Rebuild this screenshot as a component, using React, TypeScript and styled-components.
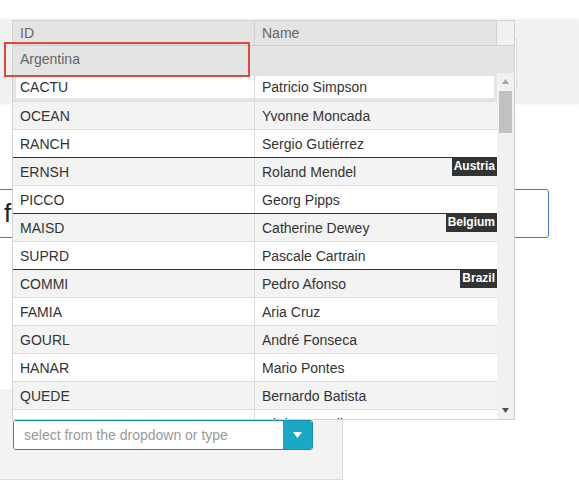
import React from "react";
import styled, { createGlobalStyle } from "styled-components";

const GlobalStyle = createGlobalStyle`
  html, body {
    margin: 0;
    padding: 0;
    background: #fff;
    font-family: "Liberation Sans", Arial, sans-serif;
  }
  * {
    box-sizing: border-box;
  }
`;

interface ICustomer {
  id: string;
  name: string;
  country?: string;
}

const customers: ICustomer[] = [
  { id: "CACTU", name: "Patricio Simpson" },
  { id: "OCEAN", name: "Yvonne Moncada" },
  { id: "RANCH", name: "Sergio Gutiérrez" },
  { id: "ERNSH", name: "Roland Mendel", country: "Austria" },
  { id: "PICCO", name: "Georg Pipps" },
  { id: "MAISD", name: "Catherine Dewey", country: "Belgium" },
  { id: "SUPRD", name: "Pascale Cartrain" },
  { id: "COMMI", name: "Pedro Afonso", country: "Brazil" },
  { id: "FAMIA", name: "Aria Cruz" },
  { id: "GOURL", name: "André Fonseca" },
  { id: "HANAR", name: "Mario Pontes" },
  { id: "QUEDE", name: "Bernardo Batista" },
  { id: "QUEEN", name: "Lúcia Carvalho" },
];

const Page = styled.div`
  position: relative;
  width: 579px;
  height: 497px;
  overflow: hidden;
  padding-top: 21px;
`;

const TopPanel = styled.div`
  height: 83px;
  background: #f1f1f1;
  box-shadow: 0 -1px 4px rgba(0, 0, 0, 0.12);
  padding: 18px 0 0 20px;
`;

const BackField = styled.div`
  width: 497px;
  height: 48px;
  background: #fff;
  border: 1px solid #dcdcdc;
`;

const BlueField = styled.div`
  margin: 85px 0 0 -2px;
  width: 551px;
  height: 49px;
  border: 1px solid #4a74e6;
  border-radius: 3px;
  padding-left: 5px;
  display: flex;
  align-items: center;
  font-size: 26px;
  color: #222;
`;

const BottomPanel = styled.div`
  margin-top: 151px;
  width: 343px;
  height: 91px;
  background: #f3f3f3;
  border-right: 1px solid #dcdcdc;
  border-bottom: 1px solid #dcdcdc;
  padding: 31px 0 0 13px;
`;

const Combo = styled.div`
  width: 300px;
  height: 30px;
  display: flex;
  border: 1px solid #1690aa;
  border-radius: 3px;
  overflow: hidden;
  background: #fff;
`;

const ComboInput = styled.input`
  flex: 1;
  min-width: 0;
  border: none;
  outline: none;
  padding: 0 0 0 10px;
  font-family: "Liberation Sans", Arial, sans-serif;
  font-size: 14px;
  color: #333;
  background: #fff;

  &::placeholder {
    color: #9a9a9a;
  }
`;

const ComboButton = styled.div`
  width: 29px;
  background: #19a9c7;
  display: flex;
  align-items: center;
  justify-content: center;
`;

const Popup = styled.div`
  position: absolute;
  left: 12px;
  top: 20px;
  width: 503px;
  height: 400px;
  background: #fff;
  border: 1px solid #d2d2d2;
  display: flex;
  flex-direction: column;
`;

const HeaderRow = styled.div`
  display: grid;
  grid-template-columns: 242px 242px 17px;
  height: 25px;
  background: #e4e4e4;
  border-bottom: 1px solid #d0d0d0;
`;

const HeaderCell = styled.div`
  padding-left: 7px;
  line-height: 24px;
  font-size: 14px;
  color: #666;
  border-right: 1px solid #d0d0d0;
`;

const HeaderSpacer = styled.div`
  background: #f1f1f1;
`;

const GroupHeader = styled.div`
  height: 27px;
  line-height: 27px;
  padding-left: 7px;
  background: #e4e4e4;
  font-size: 14px;
  color: #666;
`;

const Body = styled.div`
  flex: 1;
  display: flex;
  overflow: hidden;
`;

const Rows = styled.div`
  width: 484px;
  display: flex;
  flex-direction: column;
`;

const Row = styled.div<{ $alt: boolean; $groupStart: boolean; $first: boolean; $focused: boolean }>`
  position: relative;
  flex: none;
  display: grid;
  grid-template-columns: 242px 242px;
  height: 28px;
  background: ${(p) => (p.$alt ? "#f3f3f3" : "#fff")};
  border-top: ${(p) =>
    p.$first ? "none" : `1px solid ${p.$groupStart ? "#333" : "#dcdcdc"}`};
  box-shadow: ${(p) => (p.$focused ? "inset 0 0 0 3px #e4e4e4" : "none")};
`;

const Cell = styled.div<{ $divider?: boolean }>`
  display: flex;
  align-items: center;
  padding-left: 7px;
  font-size: 14px;
  color: #333;
  white-space: nowrap;
  overflow: hidden;
  border-right: ${(p) => (p.$divider ? "1px solid #dcdcdc" : "none")};
`;

const Badge = styled.span`
  position: absolute;
  top: -1px;
  right: 0;
  height: 19px;
  line-height: 19px;
  padding: 0 2px;
  background: #333;
  color: #fff;
  font-size: 12px;
  font-weight: bold;
`;

const ScrollTrack = styled.div`
  width: 17px;
  background: #f1f1f1;
  display: flex;
  flex-direction: column;
`;

const ArrowButton = styled.div`
  height: 17px;
  display: flex;
  align-items: center;
  justify-content: center;
`;

const Thumb = styled.div`
  margin: 1px 2px 0;
  height: 42px;
  background: #c1c1c1;
`;

const TrackFill = styled.div`
  flex: 1;
`;

const Annotation = styled.div`
  position: absolute;
  left: 4px;
  top: 42px;
  width: 246px;
  height: 35px;
  border: 2px solid #e0483e;
`;

const Triangle = ({ up, color, w = 7 }: { up?: boolean; color: string; w?: number }) => (
  <svg width={w} height={Math.ceil(w / 2) + 1} viewBox={`0 0 ${w} ${Math.ceil(w / 2) + 1}`}>
    <polygon
      points={
        up
          ? `0,${Math.ceil(w / 2) + 1} ${w},${Math.ceil(w / 2) + 1} ${w / 2},0`
          : `0,0 ${w},0 ${w / 2},${Math.ceil(w / 2) + 1}`
      }
      fill={color}
    />
  </svg>
);

export const App: React.FC = () => {
  return (
    <>
      <GlobalStyle />
      <Page>
        <TopPanel>
          <BackField />
        </TopPanel>
        <BlueField>fo</BlueField>
        <BottomPanel>
          <Combo>
            <ComboInput placeholder="select from the dropdown or type" />
            <ComboButton>
              <Triangle color="#fff" w={9} />
            </ComboButton>
          </Combo>
        </BottomPanel>

        <Popup>
          <HeaderRow>
            <HeaderCell>ID</HeaderCell>
            <HeaderCell>Name</HeaderCell>
            <HeaderSpacer />
          </HeaderRow>
          <GroupHeader>Argentina</GroupHeader>
          <Body>
            <Rows>
              {customers.map((c, i) => (
                <Row
                  key={c.id}
                  $alt={i % 2 === 1}
                  $groupStart={!!c.country}
                  $first={i === 0}
                  $focused={i === 0}
                >
                  <Cell $divider>{c.id}</Cell>
                  <Cell>{c.name}</Cell>
                  {c.country && <Badge>{c.country}</Badge>}
                </Row>
              ))}
            </Rows>
            <ScrollTrack>
              <ArrowButton>
                <Triangle up color="#a3a3a3" />
              </ArrowButton>
              <Thumb />
              <TrackFill />
              <ArrowButton>
                <Triangle color="#505050" />
              </ArrowButton>
            </ScrollTrack>
          </Body>
        </Popup>
        <Annotation />
      </Page>
    </>
  );
};

export default App;
